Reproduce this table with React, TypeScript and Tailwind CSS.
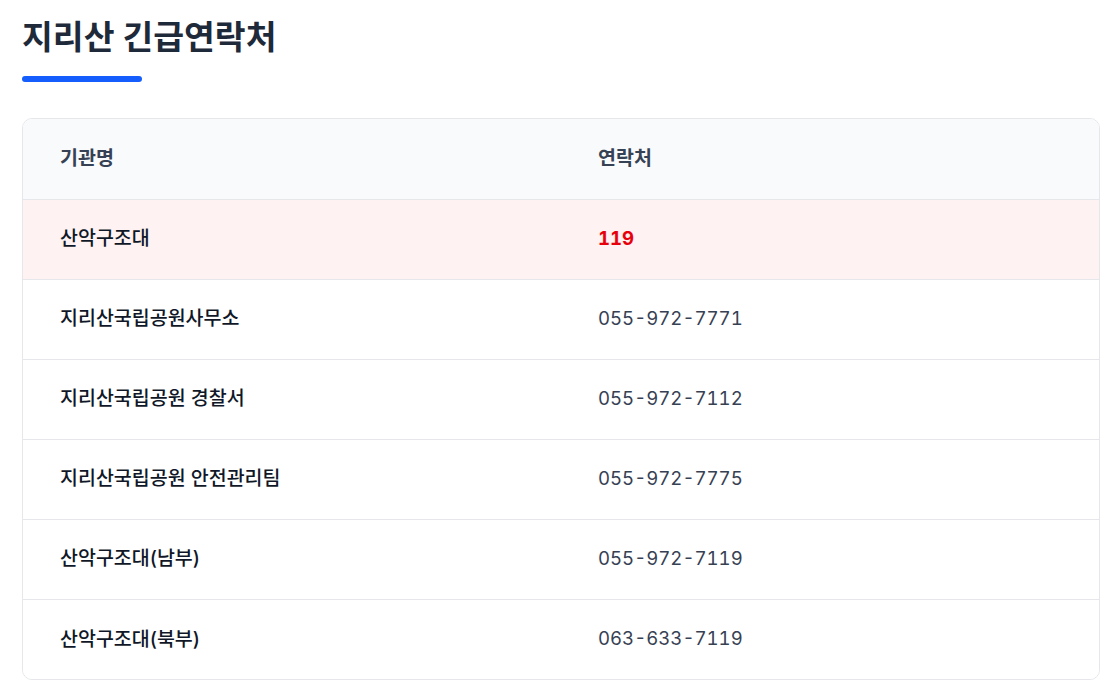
const rows = [
  { name: '산악구조대', phone: '119', urgent: true },
  { name: '지리산국립공원사무소', phone: '055-972-7771' },
  { name: '지리산국립공원 경찰서', phone: '055-972-7112' },
  { name: '지리산국립공원 안전관리팀', phone: '055-972-7775' },
  { name: '산악구조대(남부)', phone: '055-972-7119' },
  { name: '산악구조대(북부)', phone: '063-633-7119' },
];

const font = "font-['Inter','Noto_Sans_CJK_KR',sans-serif]";

export default function App() {
  return (
    <div className={`min-h-screen bg-white pl-[22px] pr-[18px] pt-[12px] ${font}`}>
      {/* Title */}
      <h1 className="text-[33.5px] font-bold leading-[50px] text-gray-800">지리산 긴급연락처</h1>
      <div className="mt-[14px] h-[6px] w-[120px] rounded-full bg-blue-600" />

      {/* Contacts table */}
      <div className="mt-[36px] overflow-hidden rounded-[10px] border border-gray-200">
        <table className="w-full table-fixed border-collapse">
          <thead>
            <tr className="h-[80px] border-b border-gray-200 bg-gray-50">
              <th className="w-1/2 px-[37px] text-left text-[19.5px] font-semibold text-gray-700">기관명</th>
              <th className="w-1/2 px-[37px] text-left text-[19.5px] font-semibold text-gray-700">연락처</th>
            </tr>
          </thead>
          <tbody>
            {rows.map((r, i) => (
              <tr
                key={r.name}
                className={`h-[80px] ${i < rows.length - 1 ? 'border-b border-gray-200' : ''} ${r.urgent ? 'bg-red-50' : 'bg-white'}`}
              >
                <td className="px-[37px] text-[19.5px] font-medium text-gray-900">{r.name}</td>
                <td
                  className={`px-[37px] text-[18.6px] tabular-nums ${r.urgent ? 'font-bold text-red-600' : 'text-gray-700'}`}
                >
                  {r.phone}
                </td>
              </tr>
            ))}
          </tbody>
        </table>
      </div>
    </div>
  );
}
